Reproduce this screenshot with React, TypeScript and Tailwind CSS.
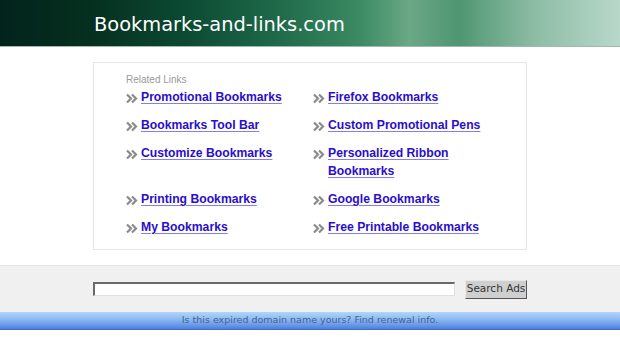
import React from "react";

const Chev = () => (
  <svg width="12" height="11" viewBox="0 0 12 11" className="shrink-0 mt-[5px]">
    <path d="M1 1.5 L5 5.5 L1 9.5" fill="none" stroke="#8a8a8a" strokeWidth="2.2" />
    <path d="M6 1.5 L10 5.5 L6 9.5" fill="none" stroke="#8a8a8a" strokeWidth="2.2" />
  </svg>
);

const Item = ({ text }: { text: string }) => (
  <div className="flex items-start gap-[3px]">
    <Chev />
    <a
      href="#"
      className="text-[12.2px] leading-[18px] font-bold text-[#2a0ecc] underline decoration-[#8080ee] underline-offset-[2px]"
      style={{ fontFamily: "'Liberation Sans', Arial, sans-serif" }}
    >
      {text}
    </a>
  </div>
);

export default function App() {
  const left = ["Promotional Bookmarks", "Bookmarks Tool Bar", "Customize Bookmarks", "Printing Bookmarks", "My Bookmarks"];
  const right = ["Firefox Bookmarks", "Custom Promotional Pens", "Personalized Ribbon Bookmarks", "Google Bookmarks", "Free Printable Bookmarks"];
  return (
    <div className="w-[620px] h-[343px] bg-white overflow-hidden" style={{ fontFamily: "'DejaVu Sans', sans-serif" }}>
      <div
        className="h-[47px] flex items-center pl-[94px] pt-[3px] border-b border-[#9fb8ae]"
        style={{ background: "linear-gradient(90deg, #02231c 0%, #05301f 15%, #0c4a33 30%, #1f6a4a 45%, #3b8a63 58%, #6aa886 66%, #4f9672 74%, #8cbca4 86%, #b8d8ca 100%)" }}
      >
        <span className="text-white text-[19.4px] leading-none">Bookmarks-and-links.com</span>
      </div>
      <div className="h-[218px] pt-[15px] pl-[93px]">
        <div className="w-[434px] h-[188px] border border-[#e6e6e6] pl-[32px] pt-[11px]">
          <div className="text-[10px] leading-[12px] text-[#9a9a9a]" style={{ fontFamily: "'Liberation Sans', Arial, sans-serif" }}>
            Related Links
          </div>
          <div className="grid grid-cols-[187px_180px] gap-y-[10px] mt-[2px]">
            {left.map((l, i) => (
              <React.Fragment key={i}>
                <Item text={l} />
                <Item text={right[i]} />
              </React.Fragment>
            ))}
          </div>
        </div>
      </div>
      <div className="h-[47px] bg-[#f0f0f0] flex items-center pl-[93px] border-t border-[#e4e4e4]">
        <div className="w-[362px] h-[14px] bg-white border border-t-[#6a6a6a] border-l-[#6a6a6a] border-b-[#e0e0e0] border-r-[#e0e0e0] border-t-2 border-l-2" />
        <div className="ml-[10px] w-[62px] h-[19px] bg-[#cfcfcf] border border-t-[#e8e8e8] border-l-[#e8e8e8] border-b-[#555] border-r-[#555] flex items-center justify-center text-[10.5px] text-[#333]">
          Search Ads
        </div>
      </div>
      <div
        className="h-[18px] flex items-center justify-center text-[9.5px] text-[#44648f] border-b border-[#3e6fcf]"
        style={{ background: "linear-gradient(180deg, #b2d6fb 0%, #8fbbf4 40%, #6b9ae8 75%, #4d80dc 100%)" }}
      >
        Is this expired domain name yours? Find renewal info.
      </div>
    </div>
  );
}
